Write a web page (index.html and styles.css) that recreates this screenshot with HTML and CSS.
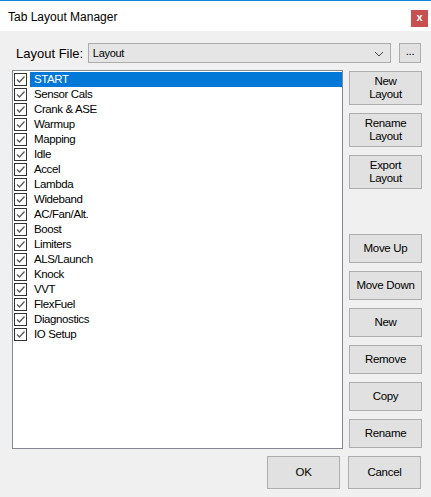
FILE: index.html
```html
<!DOCTYPE html>
<html lang="en">
<head>
    <meta charset="utf-8" />
    <title>Tab Layout Manager</title>
    <link rel="stylesheet" href="styles.css">
</head>
<body>
    <div class="window">
        <div class="titlebar">
            <span class="title">Tab Layout Manager</span>
            <button class="close-button">x</button>
        </div>

        <div class="content">
            <div class="file-row">
                <label class="file-label">Layout File:</label>
                <div class="combo">
                    <span>Layout</span>
                    <svg class="chevron" width="10" height="6" viewBox="0 0 10 6">
                        <path d="M1 1 L5 5 L9 1" fill="none" stroke="#444" stroke-width="1" />
                    </svg>
                </div>
                <button class="btn browse-button">...</button>
            </div>

            <div class="main">
                <ul class="tab-list" id="tabList"></ul>

                <div class="side-buttons">
                    <button class="btn tall">New<br>Layout</button>
                    <button class="btn tall">Rename<br>Layout</button>
                    <button class="btn tall">Export<br>Layout</button>

                    <div class="spacer"></div>

                    <button class="btn">Move Up</button>
                    <button class="btn">Move Down</button>
                    <button class="btn">New</button>
                    <button class="btn">Remove</button>
                    <button class="btn">Copy</button>
                    <button class="btn">Rename</button>
                </div>
            </div>

            <div class="footer">
                <button class="btn dialog-button">OK</button>
                <button class="btn dialog-button">Cancel</button>
            </div>
        </div>
    </div>

    <script>
        const tabs = [
            'START', 'Sensor Cals', 'Crank & ASE', 'Warmup', 'Mapping', 'Idle',
            'Accel', 'Lambda', 'Wideband', 'AC/Fan/Alt.', 'Boost', 'Limiters',
            'ALS/Launch', 'Knock', 'VVT', 'FlexFuel', 'Diagnostics', 'IO Setup'
        ];

        const list = document.getElementById('tabList');

        tabs.forEach((name, i) => {
            const li = document.createElement('li');
            li.className = 'tab-item' + (i === 0 ? ' selected' : '');
            li.innerHTML =
                '<span class="check"><svg width="11" height="11" viewBox="0 0 11 11">' +
                '<path d="M2 5.5 L4.5 8 L9.5 2.5" fill="none" stroke="#5a5a5a" stroke-width="1.3" /></svg></span>' +
                '<span class="label"></span>';
            li.querySelector('.label').textContent = name;
            list.appendChild(li);
        });
    </script>
</body>
</html>
```

FILE: styles.css
```css
body {
    margin: 0;
    padding: 0;
    font-family: "Liberation Sans", Arial, sans-serif;
    color: #000;
    background: #f0f0f0;
}

.window {
    width: 431px;
    height: 497px;
    display: flex;
    flex-direction: column;
    background: #f0f0f0;
}

.titlebar {
    height: 30px;
    border-top: 1px solid #1883d7;
    background: #fff;
    display: flex;
    align-items: center;
    justify-content: space-between;
    padding: 0 3px 0 8px;
}

.title {
    font-size: 12px;
    margin-top: 1px;
}

.close-button {
    width: 17px;
    height: 17px;
    margin-top: 4px;
    border: none;
    padding: 0 0 2px;
    background: #c75050;
    color: #fff;
    font-family: "Liberation Sans", Arial, sans-serif;
    font-size: 11px;
    font-weight: bold;
}

.content {
    flex: 1;
    display: flex;
    flex-direction: column;
    padding: 12px 10px 0 12px;
}

.btn {
    box-sizing: border-box;
    border: 1px solid #adadad;
    background: #e1e1e1;
    font-family: "Liberation Sans", Arial, sans-serif;
    font-size: 11.5px;
    letter-spacing: -0.3px;
    color: #000;
    padding: 0;
    line-height: 13px;
}

.file-row {
    display: flex;
    align-items: center;
    height: 20px;
}

.file-label {
    font-size: 13px;
    margin-left: 4px;
    width: 72px;
}

.combo {
    box-sizing: border-box;
    width: 304px;
    height: 20px;
    border: 1px solid #acacac;
    background: #e5e5e5;
    display: flex;
    align-items: center;
    justify-content: space-between;
    padding: 0 6px 0 4px;
    font-size: 11px;
    letter-spacing: -0.3px;
}

.chevron {
    margin-top: 1px;
}

.browse-button {
    width: 22px;
    height: 20px;
    margin-left: 8px;
    padding-bottom: 4px;
}

.main {
    display: grid;
    grid-template-columns: 331px 73px;
    grid-template-rows: 379px;
    column-gap: 6px;
    margin-top: 7px;
}

.tab-list {
    box-sizing: border-box;
    margin: 0;
    padding: 1px 0 0 1px;
    list-style: none;
    border: 1px solid #828790;
    background: #fff;
}

.tab-item {
    height: 15px;
    display: flex;
    align-items: center;
    font-size: 11.5px;
    letter-spacing: -0.4px;
}

.check {
    box-sizing: border-box;
    width: 13px;
    height: 13px;
    border: 1px solid #333;
    background: #fff;
    display: flex;
    align-items: center;
    justify-content: center;
    flex-shrink: 0;
}

.label {
    flex: 1;
    height: 15px;
    line-height: 15px;
    margin-left: 3px;
    padding-left: 4px;
}

.tab-item.selected .label {
    background: #0078d7;
    color: #fff;
}

.side-buttons {
    display: flex;
    flex-direction: column;
    gap: 8px;
    padding-top: 1px;
}

.side-buttons .btn {
    height: 29px;
    flex-shrink: 0;
}

.side-buttons .btn.tall {
    height: 34px;
}

.spacer {
    height: 29px;
    flex-shrink: 0;
}

.footer {
    display: flex;
    justify-content: flex-end;
    gap: 8px;
    margin-top: 7px;
}

.dialog-button {
    width: 73px;
    height: 33px;
}
```
